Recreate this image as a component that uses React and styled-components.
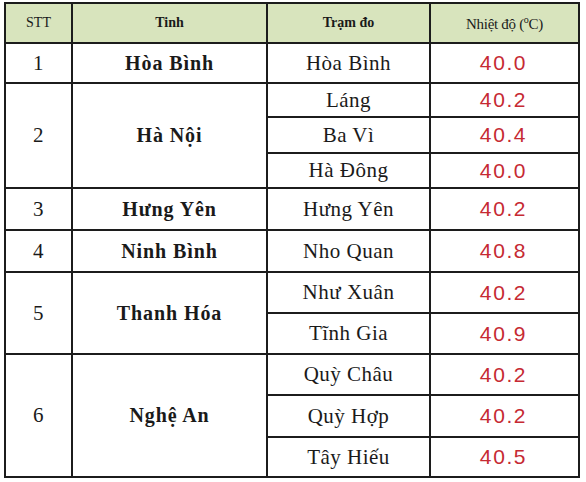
import React from "react";
import styled, { createGlobalStyle } from "styled-components";

const GlobalStyle = createGlobalStyle`
  html, body {
    margin: 0;
    padding: 0;
    background: #ffffff;
  }
`;

const Page = styled.div`
  width: 586px;
  height: 482px;
  padding: 2px 0 0 4px;
  box-sizing: border-box;
  background: #fff;
`;

const Table = styled.table`
  border-collapse: collapse;
  table-layout: fixed;
  width: 574px;
  border: 2px solid #1c1c1c;
  font-family: "Liberation Serif", "Times New Roman", serif;
  color: #1a1a1a;
`;

const HeadCell = styled.th`
  background: #d8e4bd;
  border: 2px solid #1c1c1c;
  font-size: ${(p) => (p.small ? 15 : 14)}px;
  font-weight: ${(p) => (p.bold ? 700 : 400)};
  letter-spacing: ${(p) => (p.small ? "-0.3px" : "0")};
  text-align: center;
  vertical-align: middle;
  padding: 0;
`;

const Sup = styled.sup`
  font-size: 10px;
`;

const Cell = styled.td`
  border: 2px solid #1c1c1c;
  text-align: center;
  vertical-align: middle;
  padding: 0;
  font-size: 21px;
  letter-spacing: 0.5px;
`;

const Province = styled(Cell)`
  font-size: 20px;
  font-weight: 700;
  letter-spacing: 0.9px;
`;

const Temp = styled(Cell)`
  font-family: "Liberation Sans", Arial, sans-serif;
  font-size: 21px;
  letter-spacing: 1.6px;
  color: #c62a33;
  padding-right: 2px;
`;

const Row = styled.tr`
  height: ${(p) => p.h}px;
`;

const data = [
  { stt: 1, tinh: "Hòa Bình", stations: [["Hòa Bình", "40.0", 40]] },
  {
    stt: 2,
    tinh: "Hà Nội",
    stations: [
      ["Láng", "40.2", 34],
      ["Ba Vì", "40.4", 36],
      ["Hà Đông", "40.0", 35],
    ],
  },
  { stt: 3, tinh: "Hưng Yên", stations: [["Hưng Yên", "40.2", 42]] },
  { stt: 4, tinh: "Ninh Bình", stations: [["Nho Quan", "40.8", 42]] },
  {
    stt: 5,
    tinh: "Thanh Hóa",
    stations: [
      ["Như Xuân", "40.2", 41],
      ["Tĩnh Gia", "40.9", 41],
    ],
  },
  {
    stt: 6,
    tinh: "Nghệ An",
    stations: [
      ["Quỳ Châu", "40.2", 41],
      ["Quỳ Hợp", "40.2", 42],
      ["Tây Hiếu", "40.5", 40],
    ],
  },
];

export default function App() {
  return (
    <Page>
      <GlobalStyle />
      <Table>
        <colgroup>
          <col style={{ width: 67 }} />
          <col style={{ width: 195 }} />
          <col style={{ width: 163 }} />
          <col style={{ width: 149 }} />
        </colgroup>
        <thead>
          <Row h={40}>
            <HeadCell>STT</HeadCell>
            <HeadCell bold>Tinh</HeadCell>
            <HeadCell bold>Trạm đo</HeadCell>
            <HeadCell small>
              Nhiệt độ (<Sup>o</Sup>C)
            </HeadCell>
          </Row>
        </thead>
        <tbody>
          {data.map((group) =>
            group.stations.map(([name, temp, h], i) => (
              <Row h={h} key={group.stt + name}>
                {i === 0 && (
                  <>
                    <Cell rowSpan={group.stations.length}>{group.stt}</Cell>
                    <Province rowSpan={group.stations.length}>
                      {group.tinh}
                    </Province>
                  </>
                )}
                <Cell>{name}</Cell>
                <Temp>{temp}</Temp>
              </Row>
            ))
          )}
        </tbody>
      </Table>
    </Page>
  );
}
